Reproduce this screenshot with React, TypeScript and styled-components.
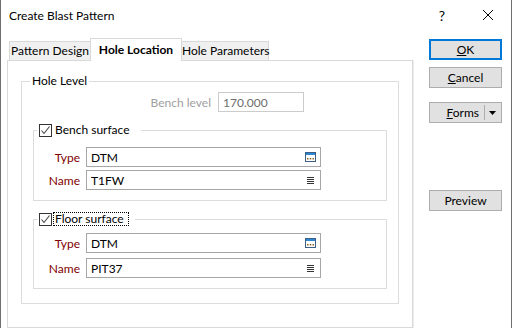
import React from "react";
import styled, { createGlobalStyle, css } from "styled-components";

const GlobalStyle = createGlobalStyle`
  html, body {
    margin: 0;
    padding: 0;
    background: #ffffff;
  }
  body {
    font-family: "Lato", "Open Sans", sans-serif;
    font-size: 12px;
    color: #000000;
  }
  * {
    box-sizing: border-box;
  }
`;

const Window = styled.div`
  width: 512px;
  height: 328px;
  overflow: hidden;
  background: #ffffff;
  border-left: 1px solid #6f6f6f;
  border-right: 1px solid #6f6f6f;
  display: flex;
  flex-direction: column;
`;

const TitleBar = styled.div`
  height: 30px;
  display: flex;
  align-items: center;
  padding-left: 8px;
  flex-shrink: 0;
`;

const Title = styled.div`
  flex: 1;
  font-size: 12px;
`;

const CaptionButton = styled.div`
  width: 46px;
  height: 30px;
  display: flex;
  align-items: center;
  justify-content: center;
  font-size: 14px;
`;

const Body = styled.div`
  flex: 1;
  display: flex;
  padding: 8px 0 0 6px;
  min-height: 0;
`;

const TabArea = styled.div`
  width: 406px;
  display: flex;
  flex-direction: column;
`;

const TabRow = styled.div`
  height: 22px;
  display: flex;
  align-items: flex-end;
  padding-left: 2px;
  flex-shrink: 0;
`;

const Tab = styled.div<{ $active?: boolean; $w: number }>`
  width: ${(p) => p.$w}px;
  height: 19px;
  line-height: 18px;
  text-align: center;
  white-space: nowrap;
  background: #f0f0f0;
  border: 1px solid #d9d9d9;
  border-bottom: none;
  margin-left: -1px;
  &:first-child {
    margin-left: 0;
  }
  ${(p) =>
    p.$active &&
    css`
      position: relative;
      z-index: 1;
      height: 23px;
      line-height: 21px;
      margin-bottom: -1px;
      background: #ffffff;
      font-weight: 700;
    `}
`;

const Panel = styled.div`
  flex: 1;
  border: 1px solid #d9d9d9;
  box-shadow: 1px 0 0 #ececec;
  padding: 13px 13px 0;
`;

const Group = styled.fieldset<{ $inset?: boolean; $padTop: number; $padBottom: number; $gap?: number }>`
  margin: 0;
  padding: ${(p) => `${p.$padTop}px 0 ${p.$padBottom}px`};
  border: 1px solid #dcdcdc;
  min-width: 0;
  display: flex;
  flex-direction: column;
  gap: ${(p) => p.$gap ?? 0}px;
  ${(p) =>
    p.$inset &&
    css`
      margin: 11px 11px 0;
    `}
`;

const Legend = styled.legend<{ $check?: boolean }>`
  margin-left: ${(p) => (p.$check ? 3 : 8)}px;
  padding: ${(p) => (p.$check ? "0 6px 0 2px" : "0 2px")};
  height: 14px;
  line-height: 14px;
`;

const LegendInner = styled.span`
  display: inline-flex;
  align-items: center;
  height: 14px;
  gap: 1px;
`;

const CheckBox = styled.span`
  width: 13px;
  height: 13px;
  border: 1px solid #333333;
  background: #ffffff;
  display: inline-flex;
  align-items: center;
  justify-content: center;
`;

const CheckLabel = styled.span<{ $focus?: boolean }>`
  padding: 0 4px 0 1px;
  line-height: 12px;
  border: 1px dotted ${(p) => (p.$focus ? "#000000" : "transparent")};
`;

const LevelRow = styled.div`
  display: flex;
  justify-content: flex-end;
  align-items: center;
  gap: 7px;
  padding-right: 94px;
  margin-top: 4px;
`;

const MutedLabel = styled.span`
  color: #a0a0a0;
`;

const Field = styled.div`
  display: flex;
  align-items: center;
  gap: 6px;
`;

const FieldLabel = styled.span`
  width: 46px;
  text-align: right;
  color: #800000;
`;

const Input = styled.div<{ $w: number; $disabled?: boolean }>`
  width: ${(p) => p.$w}px;
  height: 20px;
  border: 1px solid ${(p) => (p.$disabled ? "#cccccc" : "#a6a6a6")};
  color: ${(p) => (p.$disabled ? "#6d6d6d" : "#000000")};
  display: flex;
  align-items: center;
  padding: 0 4px;
`;

const InputText = styled.span`
  flex: 1;
`;

const IconSlot = styled.span<{ $right: number }>`
  display: inline-flex;
  margin-right: ${(p) => p.$right}px;
`;

const ButtonColumn = styled.div`
  width: 73px;
  margin-left: 16px;
  display: flex;
  flex-direction: column;
`;

const Button = styled.div<{ $default?: boolean; $top: number }>`
  height: 21px;
  margin-top: ${(p) => p.$top}px;
  background: #e1e1e1;
  border: 1px solid #adadad;
  display: flex;
  align-items: center;
  justify-content: center;
  ${(p) =>
    p.$default &&
    css`
      border: 2px solid #0078d7;
    `}
`;

const SplitButton = styled(Button)`
  justify-content: flex-end;
  padding-right: 5px;
`;

const SplitDivider = styled.span`
  width: 1px;
  height: 15px;
  background: #adadad;
  margin: 0 4px 0 5px;
`;

const WindowIcon = () => (
  <svg width="11" height="10" viewBox="0 0 11 10">
    <rect x="0.5" y="0.5" width="10" height="9" fill="#ffffff" stroke="#3d5f85" />
    <rect x="1" y="1" width="9" height="2" fill="#2f86d0" />
    <rect x="2" y="6" width="1.5" height="1.5" fill="#8a6420" />
    <rect x="4.75" y="6" width="1.5" height="1.5" fill="#8a6420" />
    <rect x="7.5" y="6" width="1.5" height="1.5" fill="#8a6420" />
  </svg>
);

const ListIcon = () => (
  <svg width="7" height="7" viewBox="0 0 7 7">
    <rect x="0" y="0" width="7" height="1" fill="#333333" />
    <rect x="0" y="2" width="7" height="1" fill="#333333" />
    <rect x="0" y="4" width="7" height="1" fill="#333333" />
    <rect x="0" y="6" width="7" height="1" fill="#333333" />
  </svg>
);

const Check = () => (
  <svg width="11" height="11" viewBox="0 0 11 11">
    <polyline points="1.5,5.5 4,8.5 9.5,1.5" fill="none" stroke="#444444" strokeWidth="1.1" />
  </svg>
);

const SurfaceGroup: React.FC<{
  title: string;
  name: string;
  focus?: boolean;
  padTop: number;
  gap: number;
}> = ({ title, name, focus, padTop, gap }) => (
  <Group $inset $padTop={padTop} $padBottom={10} $gap={gap}>
    <Legend $check>
      <LegendInner>
        <CheckBox>
          <Check />
        </CheckBox>
        <CheckLabel $focus={focus}>{title}</CheckLabel>
      </LegendInner>
    </Legend>
    <Field>
      <FieldLabel>Type</FieldLabel>
      <Input $w={235}>
        <InputText>DTM</InputText>
        <IconSlot $right={0}>
          <WindowIcon />
        </IconSlot>
      </Input>
    </Field>
    <Field>
      <FieldLabel>Name</FieldLabel>
      <Input $w={235}>
        <InputText>{name}</InputText>
        <IconSlot $right={2}>
          <ListIcon />
        </IconSlot>
      </Input>
    </Field>
  </Group>
);

const App: React.FC = () => {
  return (
    <>
      <GlobalStyle />
      <Window>
        <TitleBar>
          <Title>Create Blast Pattern</Title>
          <CaptionButton>?</CaptionButton>
          <CaptionButton>
            <svg width="10" height="10" viewBox="0 0 10 10">
              <path d="M0 0 L10 10 M10 0 L0 10" stroke="#000" strokeWidth="1" />
            </svg>
          </CaptionButton>
        </TitleBar>
        <Body>
          <TabArea>
            <TabRow>
              <Tab $w={82}>Pattern Design</Tab>
              <Tab $w={92} $active>
                Hole Location
              </Tab>
              <Tab $w={88}>Hole Parameters</Tab>
            </TabRow>
            <Panel>
              <Group $padTop={0} $padBottom={14}>
                <Legend>Hole Level</Legend>
                <LevelRow>
                  <MutedLabel>Bench level</MutedLabel>
                  <Input $w={86} $disabled>
                    170.000
                  </Input>
                </LevelRow>
                <SurfaceGroup title="Bench surface" name="T1FW" padTop={10} gap={3} />
                <SurfaceGroup title="Floor surface" name="PIT37" focus padTop={7} gap={5} />
              </Group>
            </Panel>
          </TabArea>
          <ButtonColumn>
            <Button $default $top={1}>
              <span>
                <u>O</u>K
              </span>
            </Button>
            <Button $top={7}>
              <span>
                <u>C</u>ancel
              </span>
            </Button>
            <SplitButton $top={14}>
              <span>
                <u>F</u>orms
              </span>
              <SplitDivider />
              <svg width="7" height="4" viewBox="0 0 7 4">
                <path d="M0 0 H7 L3.5 4 Z" fill="#000" />
              </svg>
            </SplitButton>
            <Button $top={67}>Preview</Button>
          </ButtonColumn>
        </Body>
      </Window>
    </>
  );
};

export default App;
